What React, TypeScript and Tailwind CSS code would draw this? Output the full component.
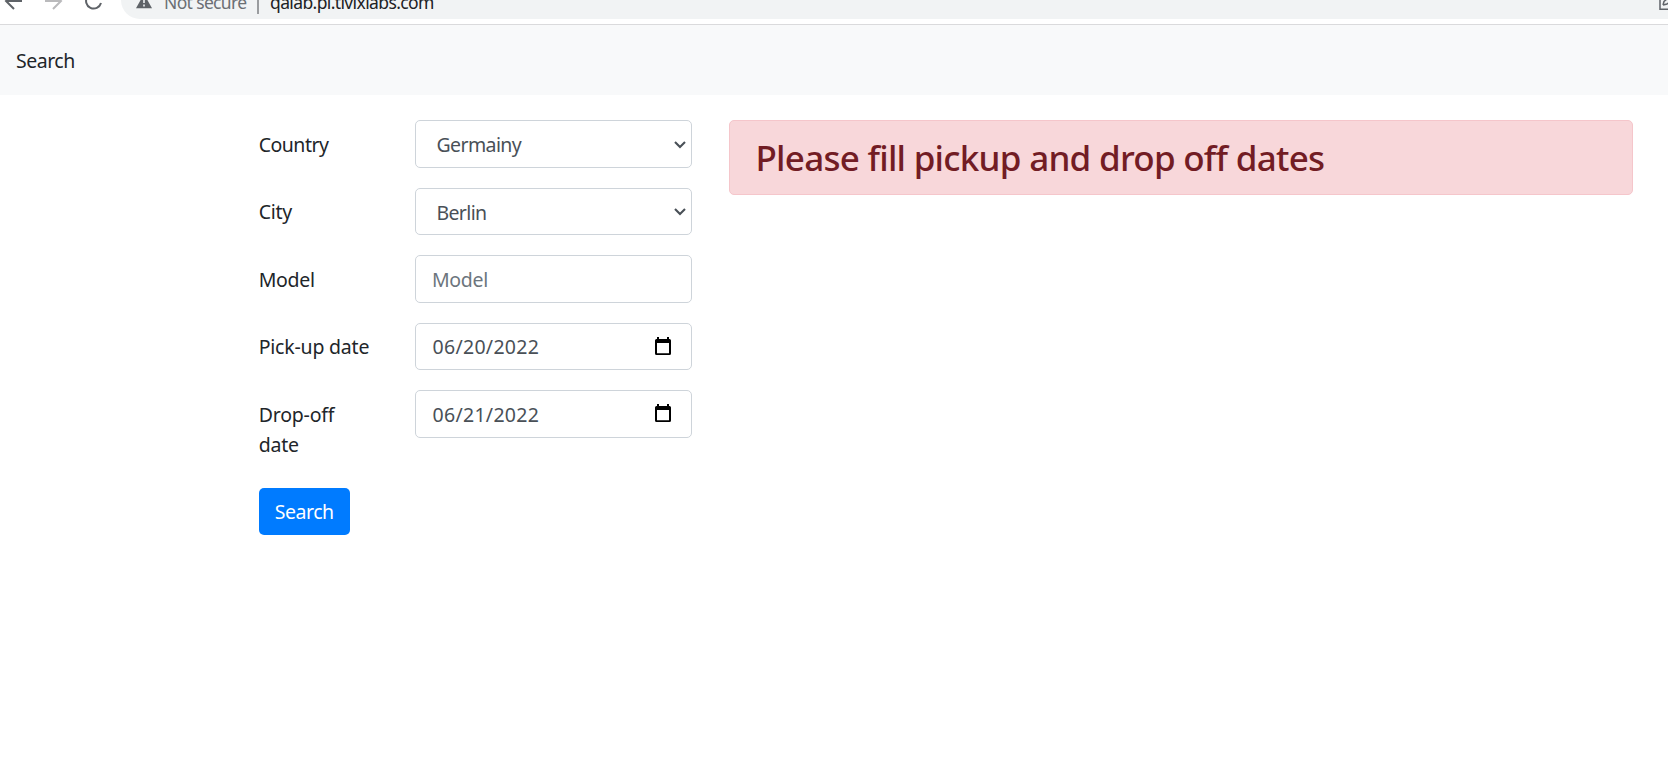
import React from 'react';

function BrowserBar() {
  return (
    <div className="flex h-[25px] items-start overflow-hidden border-b border-[#dadadc] bg-white">
      <div className="h-[19px] w-[121px] shrink-0">
        <svg width="121" height="19" viewBox="0 0 121 19" fill="none" strokeWidth="2">
          <path d="M6 1H22M14 -7L6 1L14 9" stroke="#5f6368" />
          <path d="M45 1H61M53 -7L61 1L53 9" stroke="#bababc" />
          <path d="M101 3A7.6 7.6 0 1 1 99 -4.5" stroke="#5f6368" />
        </svg>
      </div>
      <div className="flex h-[19px] grow items-start overflow-hidden rounded-bl-[19px] bg-[#f1f3f4]">
        <svg className="ml-[15px] shrink-0" width="16" height="10" viewBox="0 0 16 10">
          <path d="M8 -6L16 8.3H0Z" fill="#5f6368" />
          <path d="M7.2 -1H8.8V3H7.2ZM7.2 4.6H8.8V6.4H7.2Z" fill="#f1f3f4" />
        </svg>
        <div className="-mt-[10.5px] flex h-[24px] items-center whitespace-nowrap text-[17.5px] leading-[24px]">
          <span className="ml-[12px] w-[93px] tracking-[-0.65px] text-[#6b6f74]">Not secure</span>
          <span className="mt-[4px] h-[20px] w-[2px] bg-[#9a9c9f]" />
          <span className="ml-[11px] tracking-[-0.62px] text-[#202124]">qalab.pl.tivixlabs.com</span>
        </div>
        <svg className="ml-auto shrink-0" width="9" height="11" viewBox="0 0 9 11" fill="none" stroke="#5f6368" strokeWidth="1.5">
          <path d="M1 0V9.3H9" />
          <path d="M4 5L5 1.5L9 -2M4 5L8 4L9 3" />
        </svg>
      </div>
    </div>
  );
}

const control =
  'flex h-[47.5px] w-[277px] items-center rounded-[5px] border border-[#ced4da] bg-white text-[#495057]';

function Row({ label, children }: { label: React.ReactNode; children: React.ReactNode }) {
  return (
    <div className="mb-5 flex items-start">
      <div className="w-[156.3px] shrink-0 pt-[9.5px] pb-[8px] leading-[30px]">{label}</div>
      {children}
    </div>
  );
}

function Select({ children }: { children: React.ReactNode }) {
  return (
    <div className={control}>
      <span className="mt-[3px] ml-[20.5px]">{children}</span>
      <svg className="mt-[1.5px] mr-[5px] ml-auto" width="12" height="8" viewBox="0 0 12 8" fill="none" stroke="#495057" strokeWidth="2.1">
        <path d="M1 1L6 6L11 1" />
      </svg>
    </div>
  );
}

function DateField({ children }: { children: React.ReactNode }) {
  return (
    <div className={control}>
      <span className="mt-[2px] ml-[16.5px]">{children}</span>
      <svg className="mr-[20px] mb-[1px] ml-auto" width="16" height="18" viewBox="0 0 16 18">
        <path d="M2 0H4V2H12V0H14V2H14.5Q16 2 16 3.5V16.5Q16 18 14.5 18H1.5Q0 18 0 16.5V3.5Q0 2 1.5 2H2ZM2 6V16.2H14V6Z" fill="#000" fillRule="evenodd" />
      </svg>
    </div>
  );
}

export default function App() {
  return (
    <div className="h-[780px] overflow-hidden bg-white font-['Noto_Sans',sans-serif] text-[19.5px] leading-[30px] text-[#212529]">
      <BrowserBar />
      <nav className="flex h-[70px] items-center bg-[#f8f9fa] pl-4">
        <span className="mt-[2px] tracking-[-0.5px]">Search</span>
      </nav>
      <main className="flex items-start pt-[25px]">
        <form className="ml-[258.7px] w-[470.3px] shrink-0">
          <Row label={<span className="tracking-[-0.5px]">Country</span>}>
            <Select><span className="tracking-[-0.6px]">Germainy</span></Select>
          </Row>
          <Row label={<span className="tracking-[-0.3px]">City</span>}>
            <Select><span className="tracking-[-0.65px]">Berlin</span></Select>
          </Row>
          <Row label={<span className="tracking-[-0.3px]">Model</span>}>
            <div className={control}>
              <span className="mt-[2px] ml-[16px] tracking-[-0.3px] text-[#6c757d]">Model</span>
            </div>
          </Row>
          <Row label={<span className="tracking-[-0.2px]">Pick-up date</span>}>
            <DateField><span className="tracking-[0.3px]">06/20/2022</span></DateField>
          </Row>
          <Row label={<span className="tracking-[-0.2px]">Drop-off<br />date</span>}>
            <DateField><span className="tracking-[0.3px]">06/21/2022</span></DateField>
          </Row>
          <button type="button" className="flex h-[47px] w-[91px] items-center justify-center rounded-[5px] bg-[#007bff] text-white">
            <span className="mt-px tracking-[-0.5px]">Search</span>
          </button>
        </form>
        <div className="flex h-[75px] w-[904px] items-center rounded-[5px] border border-[#f5c6cb] bg-[#f8d7da] pl-[25.5px]">
          <h3 className="text-[35px] leading-[42px] font-medium tracking-[-0.74px] whitespace-nowrap text-[#721c24]">
            Please fill pickup and drop off dates
          </h3>
        </div>
      </main>
    </div>
  );
}
